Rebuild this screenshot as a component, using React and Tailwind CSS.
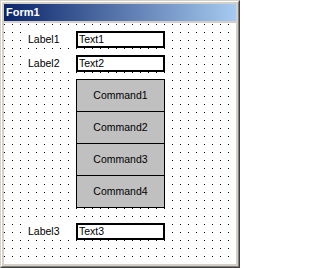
export default function App() {
  const font = { fontFamily: '"Liberation Sans", Arial, sans-serif' };
  const Row = ({ label, text }) => (
    <div className="flex items-center h-[17px] ml-[24px]">
      <div className="w-[48px] h-[17px] bg-white flex items-center text-[10.5px] leading-none text-black">{label}</div>
      <div className="w-[89px] h-[17px] border-2 border-black bg-white flex items-center pl-[1px] text-[10.5px] leading-none text-black">
        {text}
      </div>
    </div>
  );
  const Btn = ({ children, last }) => (
    <div
      className={
        "bg-[#c0c0c0] border-l border-r border-t border-black flex items-center justify-center text-[10.5px] leading-none text-black " +
        (last ? "border-b h-[33px]" : "h-[32px]")
      }
    >
      {children}
    </div>
  );
  return (
    <div className="w-[240px] h-[268px] overflow-hidden" style={font}>
      <div className="w-full h-full border border-t-[#d4d0c8] border-l-[#d4d0c8] border-b-[#404040] border-r-[#404040]">
        <div className="w-full h-full border border-t-white border-l-white border-b-[#808080] border-r-[#808080] bg-[#d4d0c8] p-[2px] flex flex-col">
          <div className="h-[17px] bg-[linear-gradient(to_right,#0a246a,#a6caf0)] flex items-center pl-[2px]">
            <span className="text-white font-bold text-[11px] leading-none">Form1</span>
          </div>
          <div className="mt-[2px] flex-1 bg-white bg-[linear-gradient(to_bottom,transparent_1px,#fff_1px),linear-gradient(to_right,#000_1px,#fff_1px)] bg-size-[8px_8px] bg-position-[0px_1px] pt-[8px] flex flex-col">
            <Row label="Label1" text="Text1" />
            <div className="mt-[7px]">
              <Row label="Label2" text="Text2" />
            </div>
            <div className="mt-[7px] ml-[72px] w-[89px] flex flex-col">
              <Btn>Command1</Btn>
              <Btn>Command2</Btn>
              <Btn>Command3</Btn>
              <Btn last>Command4</Btn>
            </div>
            <div className="mt-[15px]">
              <Row label="Label3" text="Text3" />
            </div>
          </div>
        </div>
      </div>
    </div>
  );
}
